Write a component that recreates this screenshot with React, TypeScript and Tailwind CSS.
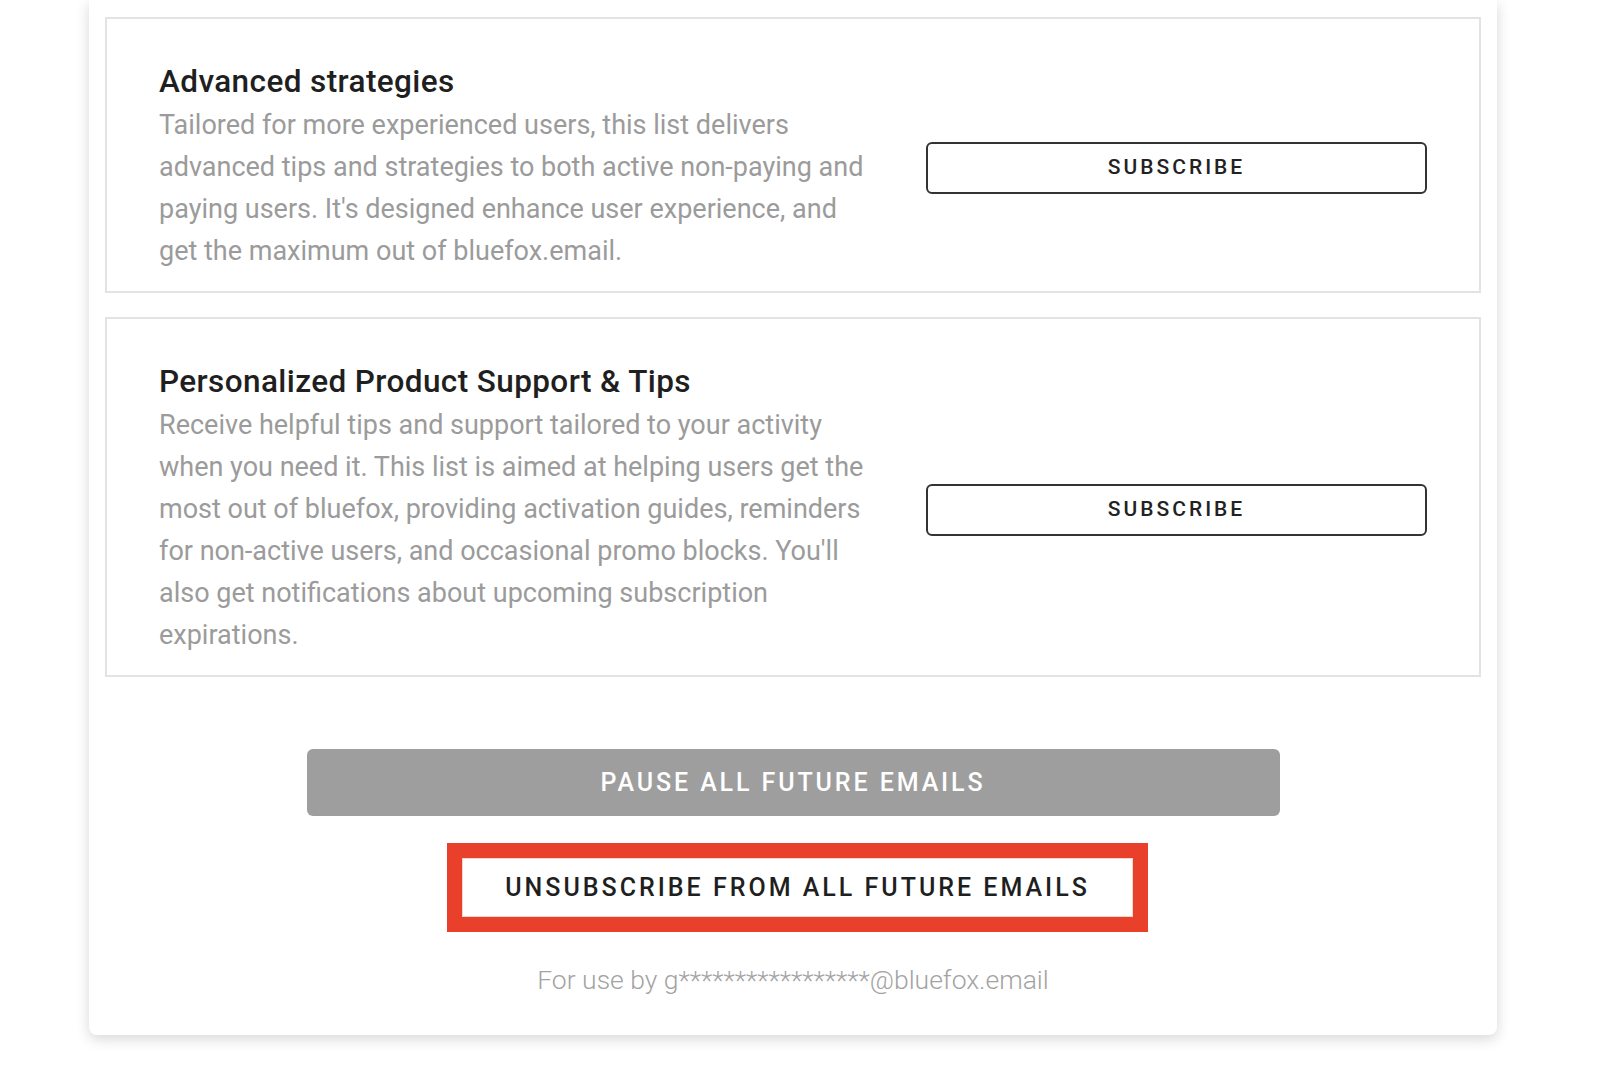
import React from 'react';

interface ListItem {
  title: string;
  description: string;
}

const lists: ListItem[] = [
  {
    title: 'Advanced strategies',
    description:
      "Tailored for more experienced users, this list delivers advanced tips and strategies to both active non-paying and paying users. It's designed enhance user experience, and get the maximum out of bluefox.email.",
  },
  {
    title: 'Personalized Product Support & Tips',
    description:
      "Receive helpful tips and support tailored to your activity when you need it. This list is aimed at helping users get the most out of bluefox, providing activation guides, reminders for non-active users, and occasional promo blocks. You'll also get notifications about upcoming subscription expirations.",
  },
];

function ListCard({ item }: { item: ListItem }) {
  return (
    <div className="flex items-center gap-[56px] border-2 border-[#e3e3e3] bg-white px-[52px] pt-[45px] pb-[19px]">
      {/* Text */}
      <div className="w-[711px] shrink-0">
        <h2 className="text-[31.5px] leading-[36px] font-medium tracking-[0.4px] text-[#1f1f1f]">
          {item.title}
        </h2>
        <p className="mt-[4px] text-[27px] leading-[42px] text-[#9b9b9b]">{item.description}</p>
      </div>

      {/* Subscribe */}
      <button className="h-[52px] w-[501px] shrink-0 rounded-md border-2 border-[#333333] bg-white text-[21px] font-medium tracking-[3px] text-[#222222]">
        SUBSCRIBE
      </button>
    </div>
  );
}

export default function App() {
  return (
    <div className="min-h-screen bg-white" style={{ fontFamily: 'Roboto, "Noto Sans", sans-serif' }}>
      <div className="ml-[89px] w-[1408px] rounded-b-lg bg-white px-4 pt-[17px] pb-[40px] shadow-[0_4px_14px_rgba(0,0,0,0.16)]">
        <div className="flex flex-col gap-[24px]">
          {lists.map((item) => (
            <ListCard key={item.title} item={item} />
          ))}
        </div>

        {/* Actions */}
        <div className="mt-[72px] flex flex-col items-center">
          <button className="h-[67px] w-[973px] rounded-md bg-[#9e9e9e] text-[25px] font-medium tracking-[2.9px] text-white">
            PAUSE ALL FUTURE EMAILS
          </button>

          <div className="mt-[27px] pl-[9px]">
            <div className="border-[15px] border-[#e8402b]">
              <button className="flex h-[59px] w-[671px] items-center justify-center border border-[#f3d6cf] bg-white text-[25px] font-medium tracking-[3px] text-[#1f1f1f]">
                UNSUBSCRIBE FROM ALL FUTURE EMAILS
              </button>
            </div>
          </div>

          <p className="mt-[33px] text-[26.5px] leading-[30px] font-light text-[#a3a3a3]">
            For use by g*****************@bluefox.email
          </p>
        </div>
      </div>
    </div>
  );
}
